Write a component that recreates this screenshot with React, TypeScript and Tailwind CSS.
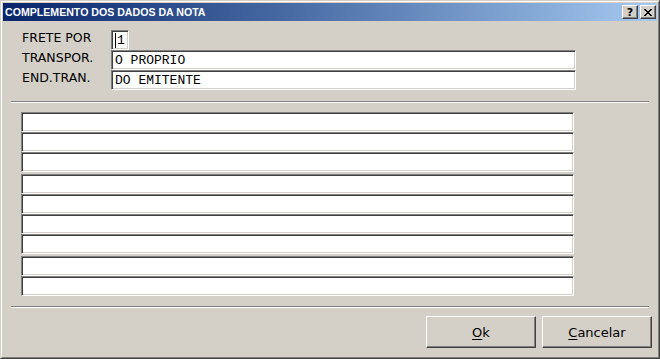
import React from "react";

const sunken =
  "border border-t-[#808080] border-l-[#808080] border-b-white border-r-white shadow-[inset_1px_1px_0_#404040,inset_-1px_-1px_0_#d4d0c8] bg-white";
const raised =
  "border border-t-white border-l-white border-b-[#404040] border-r-[#404040] shadow-[inset_-1px_-1px_0_#808080] bg-[#d4d0c8]";
const etched = "h-[2px] border-t border-t-[#808080] border-b border-b-white";

function Field({ w, text }: { w: string; text?: string }) {
  return (
    <div className={`${sunken} ${w} h-[20px] flex items-center pl-[3px] font-['Liberation_Mono',monospace] text-[13px] text-black leading-none`}>
      {text}
    </div>
  );
}

function GridRow() {
  return <div className={`${sunken} w-[553px] h-[20px]`} />;
}

export default function App() {
  const label = "w-[89px] -mt-[3px] font-['DejaVu_Sans',sans-serif] text-[12.5px] text-black leading-none";
  return (
    <div className="w-[660px] h-[359px] border border-t-[#d4d0c8] border-l-[#d4d0c8] border-b-[#404040] border-r-[#404040] bg-[#d4d0c8]">
      <div className="w-full h-full border border-t-white border-l-white border-b-[#808080] border-r-[#808080] p-px flex flex-col">
        {/* Title bar */}
        <div className="h-[18px] flex items-center justify-between bg-gradient-to-r from-[#0a246a] to-[#a6caf0] pl-[2px] pr-[1px]">
          <span className="font-['Liberation_Sans',sans-serif] font-bold text-[10.6px] text-white leading-none">
            COMPLEMENTO DOS DADOS DA NOTA
          </span>
          <div className="flex gap-[2px]">
            <div className={`${raised} w-[16px] h-[14px] flex items-center justify-center font-['DejaVu_Sans',sans-serif] font-bold text-[11px] leading-none text-black`}>
              ?
            </div>
            <div className={`${raised} w-[16px] h-[14px] flex items-center justify-center`}>
              <svg width="8" height="7" viewBox="0 0 8 7" shapeRendering="crispEdges">
                <path
                  d="M0 0h2v1H0zM6 0h2v1H6zM1 1h2v1H1zM5 1h2v1H5zM2 2h4v1H2zM3 3h2v1H3zM2 4h4v1H2zM1 5h2v1H1zM5 5h2v1H5zM0 6h2v1H0zM6 6h2v1H6z"
                  fill="#000"
                />
              </svg>
            </div>
          </div>
        </div>

        {/* Header fields */}
        <div className="pt-[9px] pl-[19px] flex flex-col">
          <div className="flex items-center h-[20px]">
            <span className={label}>FRETE POR</span>
            <div className={`${sunken} w-[18px] h-[20px] flex items-center pl-[3px]`}>
              <span className="w-px h-[15px] bg-black" />
              <span className="ml-px font-['Liberation_Mono',monospace] text-[13px] leading-none text-black">1</span>
            </div>
          </div>
          <div className="flex items-center h-[20px]">
            <span className={label}>TRANSPOR.</span>
            <Field w="w-[465px]" text="O PROPRIO" />
          </div>
          <div className="flex items-center h-[20px]">
            <span className={label}>END.TRAN.</span>
            <Field w="w-[465px]" text="DO EMITENTE" />
          </div>
        </div>

        <div className={`${etched} mt-[11px] mx-[8px]`} />

        {/* Grid rows */}
        <div className="mt-[9px] ml-[18px] flex flex-col">
          <GridRow />
          <GridRow />
          <GridRow />
          <div className="mt-[2px]" />
          <GridRow />
          <GridRow />
          <GridRow />
          <GridRow />
          <div className="mt-[2px]" />
          <GridRow />
          <GridRow />
        </div>

        <div className={`${etched} mt-[10px] mx-[8px]`} />

        {/* Buttons */}
        <div className="mt-[8px] pr-[5px] flex justify-end gap-[6px]">
          <button className={`${raised} w-[110px] h-[32px] flex items-center justify-center font-['DejaVu_Sans',sans-serif] text-[13px] text-black leading-none`}>
            <span className="underline underline-offset-2">O</span>k
          </button>
          <button className={`${raised} w-[110px] h-[32px] flex items-center justify-center font-['DejaVu_Sans',sans-serif] text-[13px] text-black leading-none`}>
            <span className="underline underline-offset-2">C</span>ancelar
          </button>
        </div>
      </div>
    </div>
  );
}
